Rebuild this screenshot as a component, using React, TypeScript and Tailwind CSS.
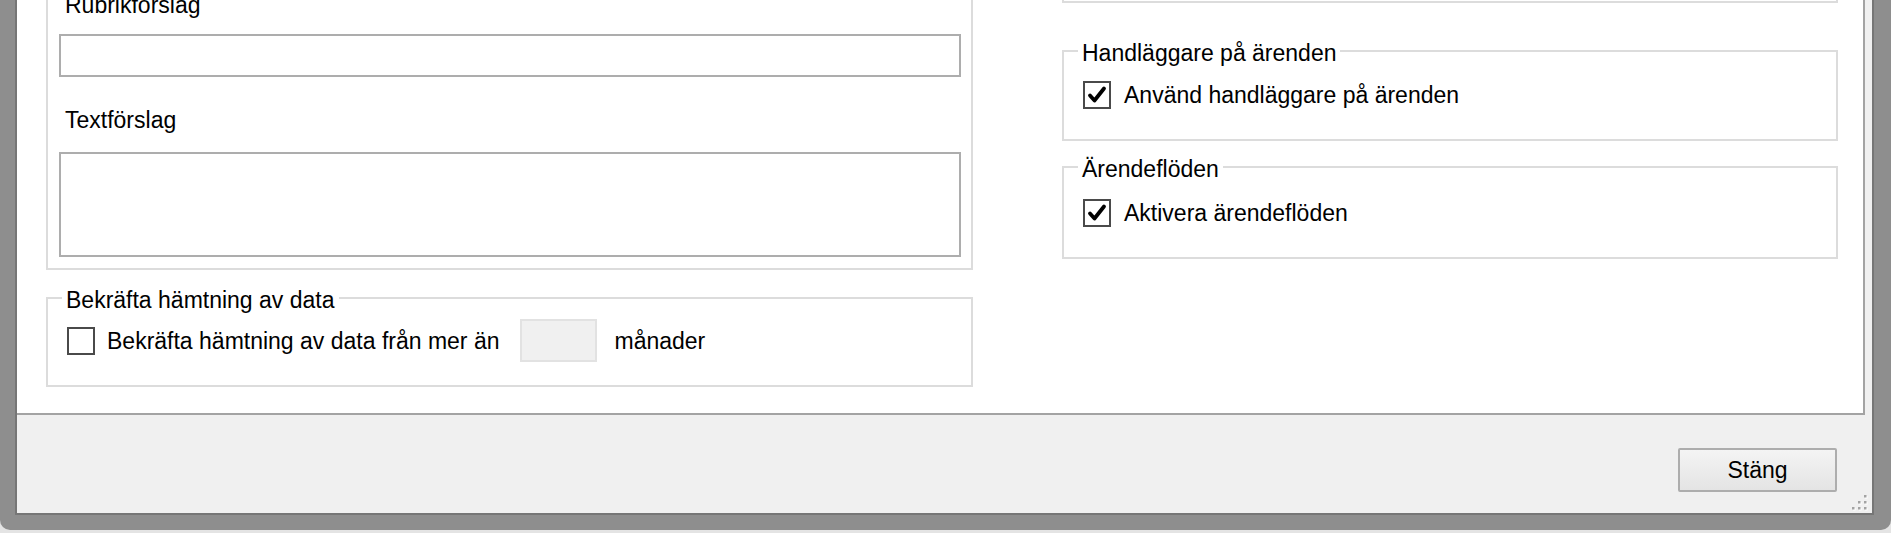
import React from "react";

function CheckBox({ checked }: { checked?: boolean }) {
  return (
    <span className="w-[28px] h-[28px] shrink-0 border-2 border-[#4a4a4a] bg-white flex items-center justify-center">
      {checked && (
        <svg width="22" height="22" viewBox="0 0 22 22">
          <path
            d="M4 11.5 L8.5 16.5 L18 4.5"
            fill="none"
            stroke="#000"
            strokeWidth="3.8"
            strokeLinecap="round"
            strokeLinejoin="round"
          />
        </svg>
      )}
    </span>
  );
}

function GroupBox({
  title,
  className = "",
  children,
}: {
  title: string;
  className?: string;
  children: React.ReactNode;
}) {
  return (
    <fieldset className={`border-2 border-[#dcdcdc] pl-[14px] pr-[14px] ${className}`}>
      <legend className="px-[4px] pt-[4px] leading-[26px]">{title}</legend>
      {children}
    </fieldset>
  );
}

function ResizeGrip() {
  const dots = [
    [14, 2],
    [8, 8],
    [14, 8],
    [2, 14],
    [8, 14],
    [14, 14],
  ];
  return (
    <svg width="18" height="18" viewBox="0 0 18 18" className="absolute right-[4px] bottom-[2px]">
      {dots.map(([x, y], i) => (
        <g key={i}>
          <rect x={x + 1} y={y + 1} width="2.5" height="2.5" fill="#ffffff" />
          <rect x={x} y={y} width="2.5" height="2.5" fill="#a3a3a3" />
        </g>
      ))}
    </svg>
  );
}

export default function App() {
  return (
    <div className="w-[1891px] h-[533px] overflow-hidden bg-[#e4e4e4] font-['Liberation_Sans',Arial,sans-serif] text-[23px] text-black">
      <div className="h-[530px] bg-[#8e8e8e] rounded-b-[10px] pl-[15px] pr-[17px] pb-[15px] flex">
        <div className="flex-1 flex flex-col bg-[#f0f0f0] border-l-2 border-r-2 border-b-2 border-[#767676]">
          {/* main white panel */}
          <div className="h-[415px] mr-[7px] bg-white border-r-2 border-b-2 border-[#a3a3a3] overflow-hidden flex gap-[89px] pl-[29px]">
            {/* left column */}
            <div className="w-[927px] flex flex-col">
              <div className="h-[270px] border-x-2 border-b-2 border-[#dcdcdc] pl-[11px] pr-[10px] flex flex-col">
                <div className="leading-[26px] -mt-[8px] pl-[6px]">Rubrikförslag</div>
                <div className="mt-[16px] h-[43px] border-2 border-[#adadad] bg-white" />
                <div className="leading-[26px] mt-[30px] pl-[6px]">Textförslag</div>
                <div className="mt-[19px] h-[105px] border-2 border-[#adadad] bg-white" />
              </div>

              <GroupBox title="Bekräfta hämtning av data" className="mt-[13px] pt-[6px] pb-[23px]">
                <div className="ml-[5px] flex items-center">
                  <CheckBox />
                  <span className="ml-[12px] leading-[26px]">Bekräfta hämtning av data från mer än</span>
                  <span className="ml-[20px] w-[77px] h-[43px] border-2 border-[#e2e2e2] bg-[#f0f0f0]" />
                  <span className="ml-[18px] leading-[26px]">månader</span>
                </div>
              </GroupBox>
            </div>

            {/* right column */}
            <div className="w-[776px] flex flex-col">
              <div className="h-[3px] border-x-2 border-b-2 border-[#dcdcdc]" />

              <GroupBox title="Handläggare på ärenden" className="mt-[33px] pt-[15px] pb-[30px]">
                <div className="ml-[5px] flex items-center gap-[13px]">
                  <CheckBox checked />
                  <span className="leading-[26px]">Använd handläggare på ärenden</span>
                </div>
              </GroupBox>

              <GroupBox title="Ärendeflöden" className="mt-[11px] pt-[17px] pb-[30px]">
                <div className="ml-[5px] flex items-center gap-[13px]">
                  <CheckBox checked />
                  <span className="leading-[26px]">Aktivera ärendeflöden</span>
                </div>
              </GroupBox>
            </div>
          </div>

          {/* footer */}
          <div className="relative flex-1 flex justify-end items-start pt-[33px] pr-[35px]">
            <button className="w-[159px] h-[44px] border-2 border-[#adadad] rounded-[2px] bg-linear-to-b from-[#f4f4f4] to-[#e4e4e4] leading-[26px] text-black">
              Stäng
            </button>
            <ResizeGrip />
          </div>
        </div>
      </div>
    </div>
  );
}
